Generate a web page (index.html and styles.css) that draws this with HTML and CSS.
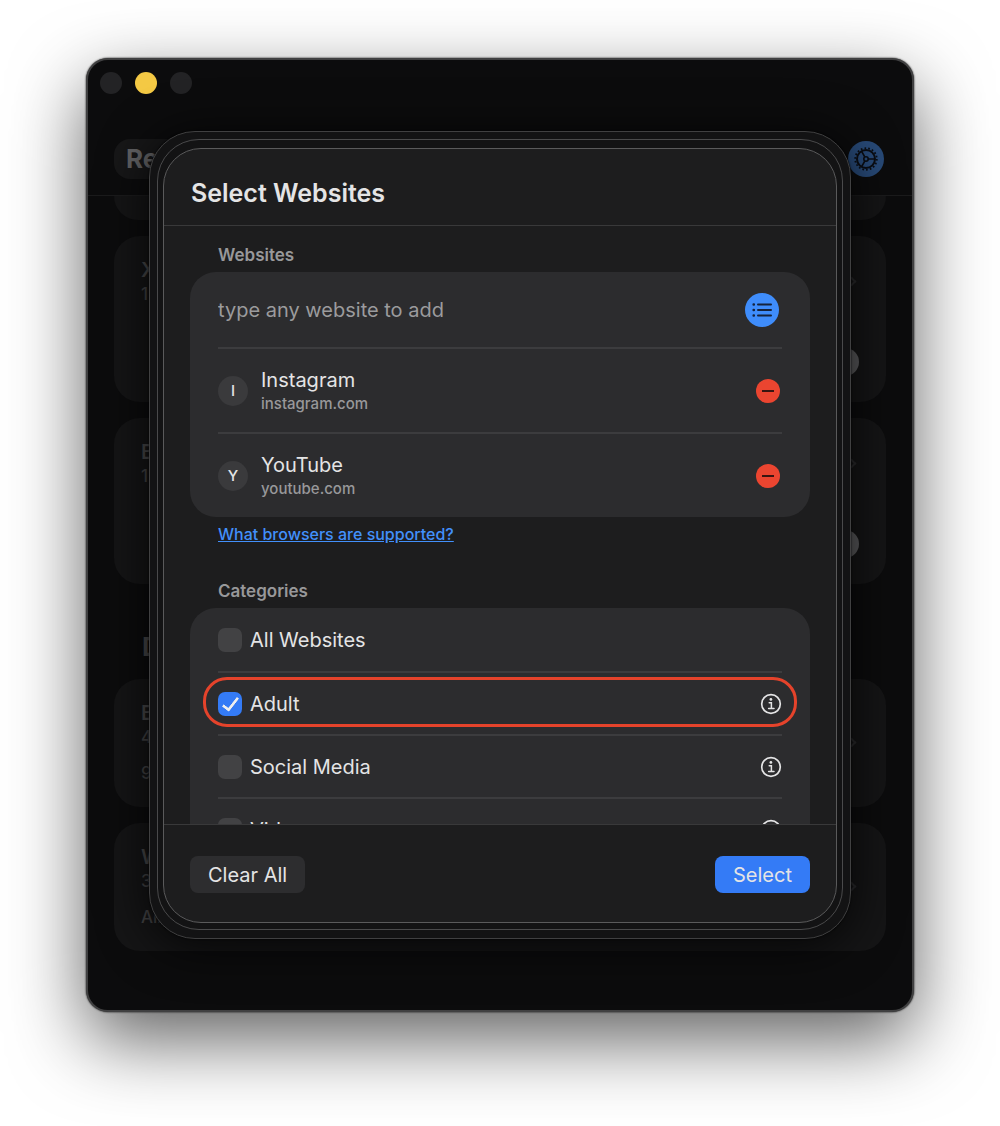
FILE: index.html
```html
<!DOCTYPE html>
<html lang="en">
<head>
    <meta charset="UTF-8">
    <meta name="viewport" content="width=device-width, initial-scale=1.0">
    <title>Select Websites</title>
    <link rel="stylesheet" href="styles.css">
</head>
<body>

<div class="window">
    <div class="lights">
        <span class="light"></span>
        <span class="light yellow"></span>
        <span class="light"></span>
    </div>

    <!-- Main screen, dimmed behind the sheet -->
    <div class="toolbar">
        <div class="pill">Re</div>
        <button class="gear" type="button" aria-label="Settings">
            <svg width="26" height="26" viewBox="0 0 26 26" fill="none" stroke="#0a0d13">
                <circle cx="13" cy="13" r="9" stroke-width="2"/>
                <circle cx="13" cy="13" r="10.8" stroke-width="1.8" stroke-dasharray="1.7 2.07"/>
                <circle cx="13" cy="13" r="2.2" stroke-width="1.6"/>
                <path d="M15.2 13H22M11.9 11.1L8.5 5.2M11.9 14.9L8.5 20.8" stroke-width="1.7"/>
            </svg>
        </button>
    </div>
    <div class="back">
        <div class="tile cut"></div>
        <div class="tile tall">
            <b>X</b>
            <small>1</small>
            <i class="chevron"></i>
            <span class="knob"></span>
        </div>
        <div class="tile tall">
            <b>B</b>
            <small>1</small>
            <i class="chevron"></i>
            <span class="knob"></span>
        </div>
        <h2>D</h2>
        <div class="tile low">
            <b>B</b>
            <small>4</small>
            <small class="extra">9</small>
            <i class="chevron"></i>
        </div>
        <div class="tile low">
            <b>W</b>
            <small>3</small>
            <small class="extra">All</small>
            <i class="chevron"></i>
        </div>
    </div>

    <!-- Stacked sheets -->
    <div class="sheet outer">
        <div class="sheet middle">
            <div class="sheet inner">
                <header>
                    <h1>Select Websites</h1>
                </header>

                <div class="content">
                    <h3>Websites</h3>
                    <div class="card">
                        <div class="row entry">
                            <input type="text" placeholder="type any website to add" aria-label="Website">
                            <button class="list" type="button" aria-label="Choose from list">
                                <svg width="20" height="16" viewBox="0 0 20 16" stroke="#15233d" stroke-width="2" stroke-linecap="round">
                                    <path d="M6 2.5H19M6 8H19M6 13.5H19"/>
                                    <path d="M1.6 2.5H1.9M1.6 8H1.9M1.6 13.5H1.9" stroke-width="2.4"/>
                                </svg>
                            </button>
                        </div>
                        <div class="row site">
                            <span class="avatar">I</span>
                            <div class="names">
                                <div class="name">Instagram</div>
                                <div class="domain">instagram.com</div>
                            </div>
                            <button class="remove" type="button" aria-label="Remove Instagram"></button>
                        </div>
                        <div class="row site">
                            <span class="avatar">Y</span>
                            <div class="names">
                                <div class="name">YouTube</div>
                                <div class="domain">youtube.com</div>
                            </div>
                            <button class="remove" type="button" aria-label="Remove YouTube"></button>
                        </div>
                    </div>
                    <a class="help" href="#">What browsers are supported?</a>

                    <h3>Categories</h3>
                    <div class="card">
                        <div class="row category">
                            <input type="checkbox" id="all">
                            <label for="all">All Websites</label>
                        </div>
                        <div class="row category highlight">
                            <input type="checkbox" id="adult" checked>
                            <label for="adult">Adult</label>
                            <button class="info" type="button" aria-label="About Adult">
                                <svg width="22" height="22" viewBox="0 0 22 22"><use href="#info"/></svg>
                            </button>
                        </div>
                        <div class="row category">
                            <input type="checkbox" id="social">
                            <label for="social">Social Media</label>
                            <button class="info" type="button" aria-label="About Social Media">
                                <svg width="22" height="22" viewBox="0 0 22 22"><use href="#info"/></svg>
                            </button>
                        </div>
                        <div class="row category">
                            <input type="checkbox" id="video">
                            <label for="video">Video</label>
                            <button class="info" type="button" aria-label="About Video">
                                <svg width="22" height="22" viewBox="0 0 22 22"><use href="#info"/></svg>
                            </button>
                        </div>
                    </div>
                </div>

                <footer>
                    <button class="btn" type="button">Clear All</button>
                    <button class="btn primary" type="button">Select</button>
                </footer>
            </div>
        </div>
    </div>
</div>

<svg class="defs" width="0" height="0">
    <symbol id="info" viewBox="0 0 22 22">
        <circle cx="11" cy="11" r="9.3" fill="none" stroke="#e4e4e5" stroke-width="1.7"/>
        <circle cx="10.9" cy="6.4" r="1.4" fill="#e4e4e5"/>
        <path d="M9.2 9.7H11.4V15.4M8.6 15.5H14" fill="none" stroke="#e4e4e5" stroke-width="1.5" stroke-linecap="round"/>
    </symbol>
</svg>

</body>
</html>
```
FILE: styles.css
```css
*, *::before, *::after {
    box-sizing: border-box;
}
body {
    margin: 0;
    padding: 58px 86px 114px;
    background-color: #fff;
    color: #e4e4e5;
    font-family: Inter, "Liberation Sans", sans-serif;
    font-size: 20px;
}
h1, h2, h3 {
    margin: 0;
}
button {
    padding: 0;
    border: none;
    background: none;
    color: inherit;
    font: inherit;
    cursor: pointer;
}
svg {
    display: block;
}
.defs {
    position: absolute;
}

/* Window */
.window {
    position: relative;
    min-height: calc(100vh - 172px);
    overflow: hidden;
    border: 2px solid #404041;
    border-radius: 22px;
    background-color: #0c0c0d;
    box-shadow: 0 28px 75px rgba(0, 0, 0, 0.62), 0 0 2px #000;
}
.lights {
    display: flex;
    gap: 13px;
    padding: 12px;
}
.light {
    width: 22px;
    height: 22px;
    border-radius: 50%;
    background-color: #232325;
}
.light.yellow {
    background-color: #f4c944;
}
.toolbar {
    display: flex;
    justify-content: space-between;
    align-items: center;
    padding: 33px 28px 16px 26px;
    border-bottom: 1px solid #1b1b1c;
}
.pill {
    width: 120px;
    padding: 0 12px;
    border-radius: 16px;
    background-color: #171718;
    color: #626264;
    font-size: 26px;
    font-weight: 700;
    line-height: 40px;
}
.gear {
    display: flex;
    justify-content: center;
    align-items: center;
    width: 36px;
    height: 36px;
    border-radius: 50%;
    background-color: #284a78;
}
.back {
    padding: 0 26px;
    color: #48484a;
}
.back h2 {
    padding: 30px 28px 15px;
    font-size: 26px;
    line-height: 34px;
}
.tile {
    position: relative;
    margin-bottom: 16px;
    padding: 22px 27px;
    border-radius: 26px;
    background-color: #151516;
}
.tile.cut {
    height: 24px;
    padding: 0;
    border-radius: 0 0 26px 26px;
}
.tile.tall {
    height: 166px;
}
.tile.low {
    height: 128px;
}
.tile b, .tile small {
    display: block;
    font-size: 20px;
    font-weight: 600;
    line-height: 24px;
}
.tile small {
    color: #424244;
    font-size: 17px;
    font-weight: 500;
}
.tile .extra {
    margin-top: 12px;
}
.chevron {
    position: absolute;
    top: 42px;
    right: 31px;
    width: 7px;
    height: 7px;
    border: solid #2a2a2c;
    border-width: 2px 2px 0 0;
    transform: rotate(45deg);
}
.low .chevron {
    top: 60px;
}
.knob {
    position: absolute;
    right: 27px;
    bottom: 26px;
    width: 28px;
    height: 28px;
    border-radius: 50%;
    background-color: #5c5c5e;
}

/* Sheets */
.sheet {
    display: flex;
    flex-direction: column;
    border: 1px solid #4a4a4b;
    background-color: #131314;
}
.sheet.outer {
    position: absolute;
    inset: 71px 61px;
    padding: 7px 7px 8px;
    border-radius: 46px;
    border-color: #404041;
    box-shadow: 0 6px 50px rgba(0, 0, 0, 0.8), 0 0 2px #000;
}
.sheet.middle {
    flex: 1;
    min-height: 0;
    padding: 8px 5px 6px;
    border-radius: 42px;
}
.sheet.inner {
    flex: 1;
    min-height: 0;
    overflow: hidden;
    border-color: #5a5a5b;
    border-radius: 38px;
    background-color: #1d1d1e;
}
header {
    padding: 28px 27px 16px;
    border-bottom: 1px solid #39393a;
}
h1 {
    font-size: 25px;
    font-weight: 600;
    line-height: 32px;
}
h3 {
    padding: 0 28px;
    color: #98989a;
    font-size: 17px;
    font-weight: 600;
    line-height: 34px;
}
.content {
    flex: 1;
    min-height: 0;
    padding: 12px 26px 0;
    overflow-y: auto;
    scrollbar-width: none;
}
.card {
    padding: 0 28px;
    border-radius: 26px;
    background-color: #2c2c2e;
}
.row {
    display: flex;
    align-items: center;
}
.row + .row {
    border-top: 2px solid #3c3c3e;
}
.entry {
    height: 75px;
}
.entry input {
    flex: 1;
    min-width: 0;
    padding: 0;
    border: none;
    outline: none;
    background: none;
    color: #e4e4e5;
    font: inherit;
}
.entry input::placeholder {
    color: #9b9b9d;
    opacity: 1;
}
.list {
    display: flex;
    justify-content: center;
    align-items: center;
    width: 34px;
    height: 34px;
    margin-right: 3px;
    border-radius: 50%;
    background-color: #3f8dfb;
}
.site {
    height: 85px;
}
.avatar {
    width: 30px;
    height: 30px;
    margin-right: 13px;
    border-radius: 50%;
    background-color: #3a3a3c;
    font-size: 15px;
    font-weight: 500;
    line-height: 30px;
    text-align: center;
}
.names {
    flex: 1;
    padding-top: 2px;
}
.name {
    font-size: 20px;
    line-height: 24px;
}
.domain {
    color: #98989a;
    font-size: 15px;
    font-weight: 500;
    line-height: 24px;
}
.remove {
    width: 24px;
    height: 24px;
    margin-right: 2px;
    border-radius: 50%;
    background-color: #eb4530;
}
.remove::before {
    content: "";
    display: block;
    width: 12px;
    height: 2px;
    margin: 0 auto;
    background-color: #3a1511;
}
.help {
    display: block;
    width: fit-content;
    margin: 0 28px 23px;
    color: #4290fb;
    font-size: 16px;
    font-weight: 500;
    line-height: 34px;
}
.category {
    position: relative;
    height: 63px;
}
.category label {
    flex: 1;
}
.category input {
    appearance: none;
    display: flex;
    justify-content: center;
    width: 24px;
    height: 24px;
    margin: 0 8px 0 0;
    border-radius: 7px;
    background-color: #424244;
}
.category input:checked {
    background-color: #347bf6;
}
.category input:checked::before {
    content: "";
    width: 9px;
    height: 17px;
    margin-top: 2px;
    border: solid #eee;
    border-width: 0 3px 3px 0;
    border-radius: 1px;
    transform: rotate(38deg);
}
.highlight::after {
    content: "";
    position: absolute;
    inset: 4px -15px 7px;
    border: 3px solid #e5432b;
    border-radius: 24px;
    pointer-events: none;
}
footer {
    display: flex;
    justify-content: space-between;
    padding: 31px 26px 29px;
    border-top: 1px solid #39393a;
}
.btn {
    height: 37px;
    padding: 0 18px;
    border-radius: 8px;
    background-color: #2d2d2f;
}
.btn.primary {
    background-color: #347bf6;
}
```
